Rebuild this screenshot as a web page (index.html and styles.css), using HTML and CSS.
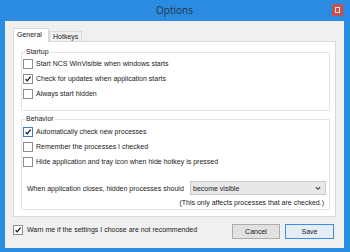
FILE: index.html
```html
<!DOCTYPE html>
<html lang="en">
<head>
    <meta charset="UTF-8">
    <title>Options</title>
    <link rel="stylesheet" href="styles.css">
</head>
<body>
    <div class="window">
        <div class="titlebar">
            <span></span>
            <span class="title">Options</span>
            <span class="close"><span class="close-x"></span></span>
        </div>

        <div class="client">
            <div class="tabs">
                <span class="tab active">General</span>
                <span class="tab">Hotkeys</span>
            </div>

            <div class="panel">
                <fieldset class="group startup">
                    <legend>Startup</legend>
                    <label class="check"><span class="box"></span>Start NCS WinVisible when windows starts</label>
                    <label class="check"><span class="box on"><svg viewBox="0 0 9 9"><path d="M1.8 4.6 L3.6 6.6 L7.4 1.8"/></svg></span>Check for updates when application starts</label>
                    <label class="check"><span class="box"></span>Always start hidden</label>
                </fieldset>

                <fieldset class="group behavior">
                    <legend>Behavior</legend>
                    <label class="check"><span class="box on focus"><svg viewBox="0 0 9 9"><path d="M1.8 4.6 L3.6 6.6 L7.4 1.8"/></svg></span>Automatically check new processes</label>
                    <label class="check"><span class="box"></span>Remember the processes I checked</label>
                    <label class="check"><span class="box"></span>Hide application and tray icon when hide hotkey is pressed</label>

                    <div class="select-row">
                        <span>When application closes, hidden processes should</span>
                        <div class="select">
                            <span>become visible</span>
                            <svg class="chev" viewBox="0 0 7 5"><path d="M1 1 L3.5 3.5 L6 1"/></svg>
                        </div>
                    </div>
                    <div class="note">(This only affects processes that are checked.)</div>
                </fieldset>
            </div>

            <div class="footer">
                <label class="check warn"><span class="box on"><svg viewBox="0 0 9 9"><path d="M1.8 4.6 L3.6 6.6 L7.4 1.8"/></svg></span>Warn me if the settings I choose are not recommended</label>
                <div class="buttons">
                    <button class="btn">Cancel</button>
                    <button class="btn default">Save</button>
                </div>
            </div>
        </div>
    </div>
</body>
</html>
```

FILE: styles.css
```css
body {
    margin: 0;
    font-family: "Liberation Sans", Arial, sans-serif;
    font-size: 7px;
    color: #1a1a1a;
}
.window {
    width: 350px;
    height: 252px;
    box-sizing: border-box;
    background-color: #2b8be0;
    padding: 0 6px 4px 5px;
}
.titlebar {
    height: 21px;
    display: grid;
    grid-template-columns: 1fr auto 1fr;
    align-items: start;
}
.title {
    font-family: "Open Sans", sans-serif;
    font-size: 10px;
    line-height: 20px;
    color: #22344a;
}
.close {
    justify-self: end;
    margin-top: 4px;
    margin-right: 1px;
    width: 11px;
    height: 12px;
    background-color: #c8504f;
    display: flex;
    align-items: center;
    justify-content: center;
}
.close-x {
    width: 3px;
    height: 4px;
    border: 1px solid #f4dede;
}
.client {
    height: 227px;
    box-sizing: border-box;
    background-color: #f0f0f0;
    padding: 7px 8px 0 8px;
}
.tabs {
    display: flex;
    align-items: flex-end;
    height: 13px;
    position: relative;
    z-index: 1;
}
.tab {
    height: 9px;
    line-height: 9px;
    padding: 0 3px;
    border: 1px solid #d9d9d9;
    border-bottom: none;
    background-color: #f0f0f0;
}
.tab.active {
    height: 13px;
    line-height: 12px;
    width: 28px;
    background-color: #fff;
    margin-bottom: -1px;
}
.panel {
    height: 176px;
    box-sizing: border-box;
    border: 1px solid #d9d9d9;
    background-color: #fff;
    padding: 6px 5px 0 7px;
}
.group {
    margin: 0;
    padding: 0 0 0 1px;
    border: 1px solid #e3e3e3;
    border-radius: 1px;
}
.group legend {
    padding: 0 1px;
    margin-left: 2px;
    line-height: 8px;
}
.startup {
    padding-bottom: 9px;
}
.behavior {
    margin-top: 4px;
    padding-top: 1px;
    padding-bottom: 2px;
}
.check {
    display: flex;
    align-items: center;
    height: 15px;
    white-space: nowrap;
}
.box {
    width: 8px;
    height: 8px;
    border: 1px solid #8d8d8d;
    background-color: #fff;
    margin-right: 3px;
    flex: none;
    display: flex;
}
.box.focus {
    border-color: #3d7cc9;
}
.box svg {
    width: 8px;
    height: 8px;
}
.box path {
    fill: none;
    stroke: #111;
    stroke-width: 1.4;
}
.select-row {
    display: flex;
    align-items: center;
    margin-top: 12px;
    padding: 0 3px 0 4px;
}
.select {
    margin-left: auto;
    width: 136px;
    height: 14px;
    box-sizing: border-box;
    border: 1px solid #c9c9c9;
    background-color: #e8e8e8;
    display: flex;
    align-items: center;
    justify-content: space-between;
    padding: 0 4px 0 2px;
}
.chev {
    width: 6px;
    height: 5px;
}
.chev path {
    fill: none;
    stroke: #333;
    stroke-width: 1.2;
}
.note {
    text-align: right;
    line-height: 8px;
    margin-top: 4px;
    padding-right: 5px;
}
.footer {
    display: flex;
    justify-content: space-between;
    align-items: flex-start;
    margin-top: 7px;
}
.warn {
    height: 11px;
    margin-top: 0;
}
.warn .box {
    margin-right: 4px;
}
.buttons {
    display: flex;
    gap: 5px;
    margin-right: 2px;
}
.btn {
    width: 48px;
    height: 15px;
    padding: 0;
    font-family: "Liberation Sans", Arial, sans-serif;
    font-size: 7px;
    color: #1a1a1a;
    border: 1px solid #adadad;
    background-color: #e1e1e1;
}
.btn.default {
    width: 49px;
    border-color: #3c8ee0;
    background-color: #e5eef8;
}
```
